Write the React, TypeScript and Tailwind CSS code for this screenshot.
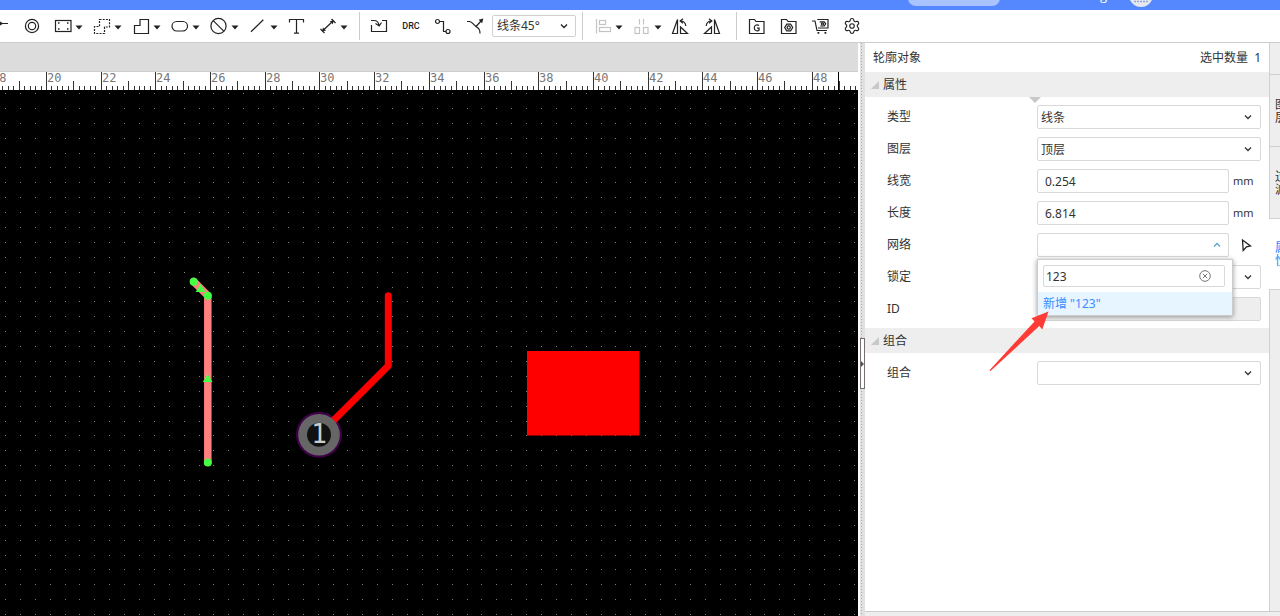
import { ReactNode, useState } from 'react';
import { Settings } from 'lucide-react';
import clsx from 'clsx';

const GRID = 14.89;
const gridDots = Array.from({ length: 100 }, (_, i) =>
  Array.from({ length: 60 }, (_, j) => `M${Math.round(5 + i * GRID)} ${Math.round(3 + j * GRID)}h1v1h-1z`).join('')
).join('');

const RULER_STEP = 5.469;
const RULER_START = 46.5 - RULER_STEP * 10;
const rulerTicks = Array.from({ length: 300 }, (_, i) => ({
  x: Math.floor(RULER_START + i * RULER_STEP) + 0.5,
  major: i % 10 === 0,
  mid: i % 10 === 5,
  label: 18 + i / 5,
}));

const Icon = ({ children, className }: { children: ReactNode; className?: string }) => (
  <svg
    viewBox="0 0 18 18"
    className={clsx('w-[18px] h-[18px] shrink-0', className)}
    fill="none"
    stroke="currentColor"
    strokeWidth="1.2"
  >
    {children}
  </svg>
);

const Caret = () => (
  <svg viewBox="0 0 8 5" className="w-2 h-[5px] ml-[3px] mt-0.5 shrink-0" fill="#222">
    <path d="M0.5 0.5h7L4 4.5z" />
  </svg>
);

const Chevron = ({ className }: { className?: string }) => (
  <svg
    viewBox="0 0 8 6"
    className={clsx('w-2 h-1.5 pointer-events-none', className)}
    fill="none"
    stroke="currentColor"
    strokeWidth="1.3"
  >
    <path d="M1 1.5l3 3 3-3" />
  </svg>
);

interface ToolProps {
  label: string;
  menu?: boolean;
  className?: string;
  children: ReactNode;
}

const Tool = ({ label, menu, className, children }: ToolProps) => (
  <button type="button" aria-label={label} className={clsx('flex items-center shrink-0', className)}>
    {children}
    {menu && <Caret />}
  </button>
);

const Divider = ({ className }: { className?: string }) => (
  <div className={clsx('w-px h-7 bg-[#cccccc] shrink-0', className)} />
);

const Toolbar = () => (
  <div className="flex items-center h-[33px] bg-white border-b border-[#cccccc] text-[#222222] shrink-0">
    <div className="flex items-center gap-2.5">
      <Tool label="导线" className="w-[13px]">
        <svg viewBox="0 0 8 18" className="w-2 h-[18px]" fill="none" stroke="currentColor" strokeWidth="1.2">
          <path d="M0 6.5h8M0 5l2 1.5L0 8" />
        </svg>
      </Tool>
      <Tool label="过孔" className="w-[21px]">
        <Icon>
          <circle cx="9" cy="9" r="6.6" />
          <circle cx="9" cy="9" r="3.7" />
        </Icon>
      </Tool>
      <Tool label="焊盘" menu>
        <Icon>
          <rect x="1.5" y="3.5" width="15.5" height="11" />
          <path d="M4 6h1.5M13 6h1.5M4 12h1.5M13 12h1.5" strokeWidth="1.5" />
        </Icon>
      </Tool>
      <Tool label="禁止区域" menu>
        <Icon>
          <path d="M6.5 2.5H16.5V10H11.5V16.5H1.5V9.5H6.5Z" strokeDasharray="2 1.2" />
        </Icon>
      </Tool>
      <Tool label="铺铜" menu>
        <Icon>
          <path d="M8 2.5H16.5V16.5H2.5V8.5H8Z" />
        </Icon>
      </Tool>
      <Tool label="填充" menu>
        <Icon>
          <rect x="1" y="4.5" width="15.5" height="9.5" rx="4.7" />
        </Icon>
      </Tool>
      <Tool label="禁止" menu>
        <Icon>
          <circle cx="8.5" cy="9" r="7.6" />
          <path d="M3.2 3.6l10.8 10.8" />
        </Icon>
      </Tool>
      <Tool label="线条" menu>
        <Icon>
          <path d="M2 14.8L14.3 2.7" />
        </Icon>
      </Tool>
      <Tool label="文本" className="w-[21px]">
        <Icon>
          <path d="M1.5 5.5V2.5H15.5V5.5M8.5 2.5V16M6 16.2H11" />
        </Icon>
      </Tool>
      <Tool label="尺寸" menu>
        <Icon>
          <path d="M3.5 14L14 4M1.5 12l4 4M12.5 2l4 4" />
          <path d="M3 14.5l1-4 3 3zM14.8 3.2l-4 1 3 3z" fill="currentColor" stroke="none" />
        </Icon>
      </Tool>
    </div>
    <Divider className="ml-[11px]" />
    <div className="flex items-center gap-3.5 ml-2.5">
      <Tool label="导入变更">
        <Icon>
          <path d="M1.5 8V14.5H16.5V3.5H12M1 3.5H4C7 3.5 8.5 5 9 8.5M5.5 6.5L9.2 9L11.5 5.5" />
        </Icon>
      </Tool>
      <button type="button" className="w-[18px] text-[9px] leading-4 font-medium font-[Roboto,sans-serif]">
        DRC
      </button>
      <Tool label="布线">
        <Icon>
          <circle cx="3.5" cy="4.5" r="2" />
          <circle cx="14" cy="14.5" r="2" />
          <path d="M5.5 4.5H9.5V14.5H12" />
        </Icon>
      </Tool>
      <Tool label="布线分支">
        <Icon>
          <path d="M1 4.5H3.5C6 4.5 7.5 7.5 10 9.5C13 11.5 14 12.5 14 16.5M10 9.5L15.5 3.5" />
          <path d="M17.3 1.5l-1.2 4.7-3.5-3.5z" fill="currentColor" stroke="none" />
        </Icon>
      </Tool>
    </div>
    <div className="relative flex items-center ml-2 w-[84px] shrink-0">
      <select
        aria-label="布线拐角"
        className="appearance-none w-full h-[22px] pl-1 border border-[#d0d0d0] rounded-[2px] bg-white text-xs text-[#333333]"
      >
        <option>线条45°</option>
      </select>
      <Chevron className="absolute right-2" />
    </div>
    <Divider className="ml-1.5" />
    <div className="flex items-center gap-2.5 ml-[11px]">
      <Tool label="对齐" menu>
        <Icon className="text-[#c4c4c4]">
          <path d="M2.5 2V16.5" />
          <rect x="5.5" y="3.5" width="6" height="4" />
          <rect x="5.5" y="10.5" width="11" height="4" />
        </Icon>
      </Tool>
      <Tool label="分布" menu>
        <Icon className="text-[#c4c4c4]">
          <path d="M6.5 2V7.5M10.5 2V7.5" />
          <rect x="2" y="10.5" width="4.5" height="6" />
          <rect x="10.5" y="10.5" width="4.5" height="6" />
        </Icon>
      </Tool>
    </div>
    <div className="flex items-center gap-3.5 ml-[9px]">
      <Tool label="左旋转">
        <Icon>
          <path d="M6.5 2.5V16.5H1.5Z" />
          <path d="M9.5 10V16.5H16.5Z" />
          <path d="M9.5 4C12.5 4 14.5 6 14.8 9M12 1.8L9.2 4L12 6.2" />
        </Icon>
      </Tool>
      <Tool label="右旋转">
        <Icon>
          <path d="M11.5 2.5V16.5H16.5Z" />
          <path d="M8.5 10V16.5H1.5Z" />
          <path d="M3.2 9C3.5 6 5.5 4 8.5 4M6 1.8L8.8 4L6 6.2" />
        </Icon>
      </Tool>
    </div>
    <Divider className="ml-[15px]" />
    <div className="flex items-center gap-3.5 ml-2.5">
      <Tool label="生成制板文件">
        <Icon>
          <path d="M2.5 16.5V2.5H7.5L9 4.5H17V16.5Z" />
          <path d="M12 8.5C10.5 7.2 7.3 7.6 7.3 11C7.3 14.3 11 14.3 12.1 13V11.2H10" />
        </Icon>
      </Tool>
      <Tool label="在线下单">
        <Icon>
          <path d="M2.5 16.5V2.5H7.5L9 4.5H17V16.5Z" />
          <path d="M7.8 7.2H11.6L13.7 10.5L11.6 13.8H7.8L5.7 10.5Z" />
          <circle cx="9.7" cy="10.5" r="1.6" />
        </Icon>
      </Tool>
      <Tool label="元件下单">
        <Icon>
          <path d="M1 4H4L6 13.5H16" />
          <path d="M6.3 2.5H17V11H7" />
          <path d="M8.7 4.8H13.3L14.7 6.8L13.3 9H9.3" />
          <circle cx="11.5" cy="6.9" r="1.1" />
          <path d="M6.5 15.8H8.3M13.5 15.8H15.3" strokeWidth="1.8" />
        </Icon>
      </Tool>
      <Tool label="设置">
        <Settings className="w-[18px] h-[18px]" strokeWidth={1.5} />
      </Tool>
    </div>
  </div>
);

const TopBar = () => (
  <header className="flex items-end justify-end h-2.5 pr-[127px] bg-[#5588ff] overflow-hidden shrink-0">
    <div className="w-[92px] h-6 mb-1 mr-[100px] rounded-lg bg-[#a9c3ff] shrink-0" />
    <span className="mr-[22px] mb-[7px] text-[13px] leading-4 text-white font-['Open_Sans',sans-serif]">g</span>
    <svg viewBox="0 0 24 24" className="w-6 h-6 mb-[3px] shrink-0">
      <circle cx="12" cy="12" r="12" fill="#e6e8ee" />
      <path d="M5 18.5h14" stroke="#8fa9dc" strokeWidth="1.5" strokeDasharray="2 1" />
    </svg>
  </header>
);

const Ruler = () => (
  <svg className="block w-full h-[18px] bg-white shrink-0" stroke="#333" shapeRendering="crispEdges">
    {rulerTicks.map((t, i) => (
      <line key={i} x1={t.x} x2={t.x} y1={t.major ? 0 : t.mid ? 9 : 14} y2="18" />
    ))}
    <line x1="838.5" x2="838.5" y1="0" y2="18" stroke="#000" />
    <g stroke="none" fill="#777" fontSize="12" fontFamily="'DejaVu Sans Mono', monospace">
      {rulerTicks
        .filter((t) => t.major)
        .map((t) => (
          <text key={t.label} x={t.x + 0.5} y="10">
            {t.label}
          </text>
        ))}
    </g>
  </svg>
);

const Board = () => (
  <div className="flex-1 min-h-0 bg-black overflow-hidden">
    <svg className="block w-full h-full">
      <path d={gridDots} fill="#808080" shapeRendering="crispEdges" />

      {/* selected track */}
      <path
        d="M193.7 191.5L207.8 205.7V372.3"
        fill="none"
        stroke="#ff8080"
        strokeWidth="7.5"
        strokeLinecap="round"
        strokeLinejoin="round"
      />
      <g fill="#44ff44">
        <circle cx="193.7" cy="191.7" r="4" />
        <circle cx="207.8" cy="205.7" r="4" />
        <circle cx="207.8" cy="372.5" r="4" />
        <path d="M200.5 194l4.8 8h-9.6zM207.6 284l4.8 8h-9.6z" />
      </g>

      {/* pad with its track */}
      <circle cx="319" cy="344.8" r="23" fill="#3f0048" />
      <path
        d="M388.3 205.8V275.8L321 343"
        fill="none"
        stroke="#ff0000"
        strokeWidth="7"
        strokeLinecap="round"
        strokeLinejoin="round"
      />
      <circle cx="319" cy="344.8" r="20.8" fill="#666666" />
      <circle cx="319" cy="344.8" r="12" fill="#111111" />
      <text x="319" y="353" textAnchor="middle" fill="#cccccc" fontSize="26" fontFamily="'DejaVu Sans Mono', monospace">
        1
      </text>

      <rect x="527" y="261" width="112.5" height="84.5" fill="#ff0000" />
    </svg>
  </div>
);

const Splitter = () => (
  <div className="flex items-center w-[7px] pl-0.5 bg-white shrink-0">
    <div className="relative w-full h-full bg-[#e0e0e0] bg-[linear-gradient(#aaaaaa_1px,transparent_1px)] bg-[length:1px_3px] bg-[position:1px_0] bg-repeat-y">
      <button
        type="button"
        aria-label="收起面板"
        className="absolute left-0 top-[295px] flex items-center w-[5px] h-[51px] bg-white border border-[#776e6e]"
      >
        <svg viewBox="0 0 3 6" className="w-[3px] h-1.5" fill="#554d4d">
          <path d="M0 0l3 3-3 3z" />
        </svg>
      </button>
    </div>
  </div>
);

const Section = ({ title, children }: { title: string; children: ReactNode }) => (
  <section>
    <h2 className="flex items-center h-[25px] pl-1.5 bg-[#eeeeee]">
      <svg viewBox="0 0 8 8" className="w-2 h-2 mr-1" fill="#c8c8c8">
        <path d="M8 0v8H0z" />
      </svg>
      {title}
    </h2>
    <div className="flex flex-col gap-2 pt-2 pb-[7px] pl-[22px] pr-2">{children}</div>
  </section>
);

const Row = ({ id, label, children }: { id: string; label: string; children: ReactNode }) => (
  <div className="flex items-center">
    <label htmlFor={id} className="w-[150px] shrink-0">
      {label}
    </label>
    <div className="relative flex items-center flex-1 min-w-0">{children}</div>
  </div>
);

const SelectBox = ({ id, value }: { id: string; value: string }) => (
  <>
    <select id={id} className="appearance-none w-full h-6 pl-[3px] pt-px border border-[#d9d9d9] rounded-[2px] bg-white">
      <option>{value}</option>
    </select>
    <Chevron className="absolute right-[9px] text-[#333333]" />
  </>
);

const UnitInput = ({ id, value }: { id: string; value: string }) => (
  <>
    <input
      id={id}
      defaultValue={value}
      className="flex-1 min-w-0 h-6 pl-[7px] border border-[#d9d9d9] rounded-[2px] bg-white"
    />
    <span className="w-8 pl-1 text-[11px] shrink-0">mm</span>
  </>
);

const NetPicker = () => {
  const [net, setNet] = useState('123');

  return (
    <>
      <button
        id="net"
        type="button"
        className="flex items-center justify-end flex-1 h-6 pr-[7px] border border-[#d9d9d9] rounded-[2px] bg-white"
      >
        <Chevron className="rotate-180 text-[#5aa5cc]" />
      </button>
      <button type="button" aria-label="拾取网络" className="w-8 pl-3 shrink-0">
        <svg viewBox="0 0 11 14" className="w-[11px] h-3.5" fill="none" stroke="#222" strokeWidth="1.3">
          <path d="M1.5 2L9.5 8L5.5 8.8L2.2 12.5Z" />
        </svg>
      </button>
      <div className="absolute left-0 top-[26px] z-10 w-[196px] pt-[5px] bg-white border border-[#cccccc] shadow-[0_1px_5px_rgba(0,0,0,0.4)]">
        <div className="relative flex items-center ml-[5px] mb-[5px] mr-[7px]">
          <input
            aria-label="搜索网络"
            value={net}
            onChange={(e) => setNet(e.target.value)}
            className="w-full h-[22px] pl-0.5 border border-[#d9d9d9] rounded-[2px]"
          />
          <button type="button" aria-label="清空" className="absolute right-3.5" onClick={() => setNet('')}>
            <svg viewBox="0 0 12 12" className="w-3 h-3" fill="none" stroke="#777">
              <circle cx="6" cy="6" r="5.3" />
              <path d="M3.8 3.8l4.4 4.4M8.2 3.8L3.8 8.2" />
            </svg>
          </button>
        </div>
        <button type="button" className="block w-full h-[23px] pl-[5px] text-left bg-[#e6f5ff] text-[#3b8cff]">
          新增 "{net}"
        </button>
      </div>
    </>
  );
};

const PropertyPanel = () => (
  <div className="relative w-[404px] bg-white shrink-0">
    <div className="flex items-center justify-between h-[29px] px-2">
      <h1>轮廓对象</h1>
      <span>选中数量&nbsp; 1</span>
    </div>
    <Section title="属性">
      <Row id="type" label="类型">
        <SelectBox id="type" value="线条" />
      </Row>
      <Row id="layer" label="图层">
        <SelectBox id="layer" value="顶层" />
      </Row>
      <Row id="width" label="线宽">
        <UnitInput id="width" value="0.254" />
      </Row>
      <Row id="length" label="长度">
        <UnitInput id="length" value="6.814" />
      </Row>
      <Row id="net" label="网络">
        <NetPicker />
      </Row>
      <Row id="lock" label="锁定">
        <SelectBox id="lock" value="" />
      </Row>
      <Row id="object-id" label="ID">
        <input id="object-id" disabled className="w-full h-6 border border-[#d9d9d9] rounded-[2px] bg-[#eeeeee]" />
      </Row>
    </Section>
    <Section title="组合">
      <Row id="group" label="组合">
        <SelectBox id="group" value="" />
      </Row>
    </Section>

    {/* column resize marker */}
    <svg viewBox="0 0 12 6" className="absolute left-[164px] top-[54px] w-3 h-1.5" fill="#c8c8c8">
      <path d="M0 0h12L6 6z" />
    </svg>
    {/* pointer to the new net option */}
    <svg viewBox="0 0 60 61" className="absolute left-[124px] top-[268px] z-20 w-[60px] h-[61px] pointer-events-none" fill="#ff3b36">
      <path d="M0.5 59.2L45.5 10.5L42.5 7.3L59.5 0.5L53.3 18.5L50.3 15L1.5 60Z" />
    </svg>
  </div>
);

const tabs = [
  { name: '图层', active: false },
  { name: '过滤', active: false },
  { name: '属性', active: true },
];

const SideTabs = () => (
  <nav className="w-[11px] pt-[31px] bg-[#eeeeee] overflow-hidden shrink-0 shadow-[inset_1px_0_0_#d0d0d0]">
    {tabs.map((tab) => (
      <button
        key={tab.name}
        type="button"
        className={clsx(
          'flex items-center w-6 pl-1.5 border-t border-[#d0d0d0] leading-[13px]',
          tab.active ? 'h-[72px] border-b bg-white text-[#2a7fff]' : 'h-[72px]'
        )}
      >
        <span className="w-3 break-all">{tab.name}</span>
      </button>
    ))}
  </nav>
);

const App = () => {
  return (
    <div className="flex flex-col h-screen overflow-hidden bg-white text-xs text-[#333333] font-['Noto_Sans','Noto_Sans_CJK_SC',sans-serif]">
      <TopBar />
      <Toolbar />
      <div className="flex flex-1 min-h-0">
        <main className="flex flex-col flex-1 min-w-0">
          <div className="h-[29px] bg-[#dcdcdc] border-b border-[#cccccc] shrink-0" />
          <Ruler />
          <Board />
        </main>
        <Splitter />
        <aside className="flex flex-col shrink-0">
          <div className="flex flex-1 min-h-0">
            <PropertyPanel />
            <SideTabs />
          </div>
          <div className="h-[5px] bg-[#eeeeee] border-t border-[#cccccc] shrink-0" />
        </aside>
      </div>
    </div>
  );
};

export default App;
